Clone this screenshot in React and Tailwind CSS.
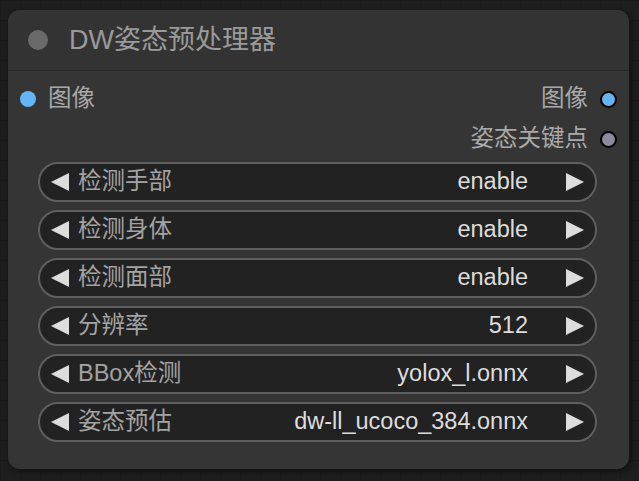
import React from "react";

const widgets = [
    { label: "检测手部", value: "enable" },
    { label: "检测身体", value: "enable" },
    { label: "检测面部", value: "enable" },
    { label: "分辨率", value: "512" },
    { label: "BBox检测", value: "yolox_l.onnx" },
    { label: "姿态预估", value: "dw-ll_ucoco_384.onnx" },
];

const Arrow = ({ dir }) => (
    <svg width="20" height="20" viewBox="0 0 20 20" className="shrink-0">
        {dir === "left" ? (
            <polygon points="19,1 19,19 1,10" fill="#dddddd" />
        ) : (
            <polygon points="1,1 1,19 19,10" fill="#dddddd" />
        )}
    </svg>
);

const Widget = ({ label, value }) => (
    <div className="h-10 flex items-center rounded-full border-2 border-[#5e5e5e] bg-[#222222] pl-[10px] pr-[10px]">
        <Arrow dir="left" />
        <span className="ml-2 text-[23.5px] leading-none text-[#a3a3a3]">{label}</span>
        <span className="ml-auto mr-[37px] text-[23.5px] leading-none text-[#dddddd]">{value}</span>
        <Arrow dir="right" />
    </div>
);

export default function App() {
    return (
        <div
            className="w-[639px] h-[481px] overflow-hidden bg-[#1e1e1e] pt-[10px] pl-[8px] bg-[linear-gradient(#1a1a1a_1px,transparent_1px),linear-gradient(90deg,#1a1a1a_1px,transparent_1px)] bg-[size:20px_20px]"
            style={{ fontFamily: '"Liberation Sans", "Noto Sans CJK SC", sans-serif' }}
        >
            <div className="w-[621px] h-[459px] rounded-[12px] bg-[#353535] shadow-[2px_2px_6px_rgba(0,0,0,0.5)] flex flex-col overflow-hidden">
                {/* title */}
                <div className="h-[61px] shrink-0 flex items-center bg-[#333333] border-b border-[#2a2a2a] pl-5">
                    <div className="w-5 h-5 rounded-full bg-[#6a6a6a]" />
                    <span className="ml-[21px] text-[27px] leading-none text-[#9a9a9a]">DW姿态预处理器</span>
                </div>

                {/* slots */}
                <div className="pt-2 flex">
                    <div className="flex-1">
                        <div className="h-10 flex items-center pl-3">
                            <div className="w-4 h-4 rounded-full bg-[#64b5f6]" />
                            <span className="ml-[12px] text-[23.5px] leading-none text-[#a8a8a8]">图像</span>
                        </div>
                    </div>
                    <div className="flex flex-col items-end pr-3">
                        <div className="h-10 flex items-center">
                            <span className="text-[23.5px] leading-none text-[#a8a8a8]">图像</span>
                            <div className="ml-[12px] w-[17px] h-[17px] rounded-full bg-[#64b5f6] border-2 border-black" />
                        </div>
                        <div className="h-10 flex items-center">
                            <span className="text-[23.5px] leading-none text-[#a8a8a8]">姿态关键点</span>
                            <div className="ml-[12px] w-[17px] h-[17px] rounded-full bg-[#8c8a9c] border-2 border-black" />
                        </div>
                    </div>
                </div>

                {/* widgets */}
                <div className="mt-[3px] pl-[30px] pr-[32px] flex flex-col gap-2">
                    {widgets.map((w) => (
                        <Widget key={w.label} label={w.label} value={w.value} />
                    ))}
                </div>
            </div>
        </div>
    );
}
